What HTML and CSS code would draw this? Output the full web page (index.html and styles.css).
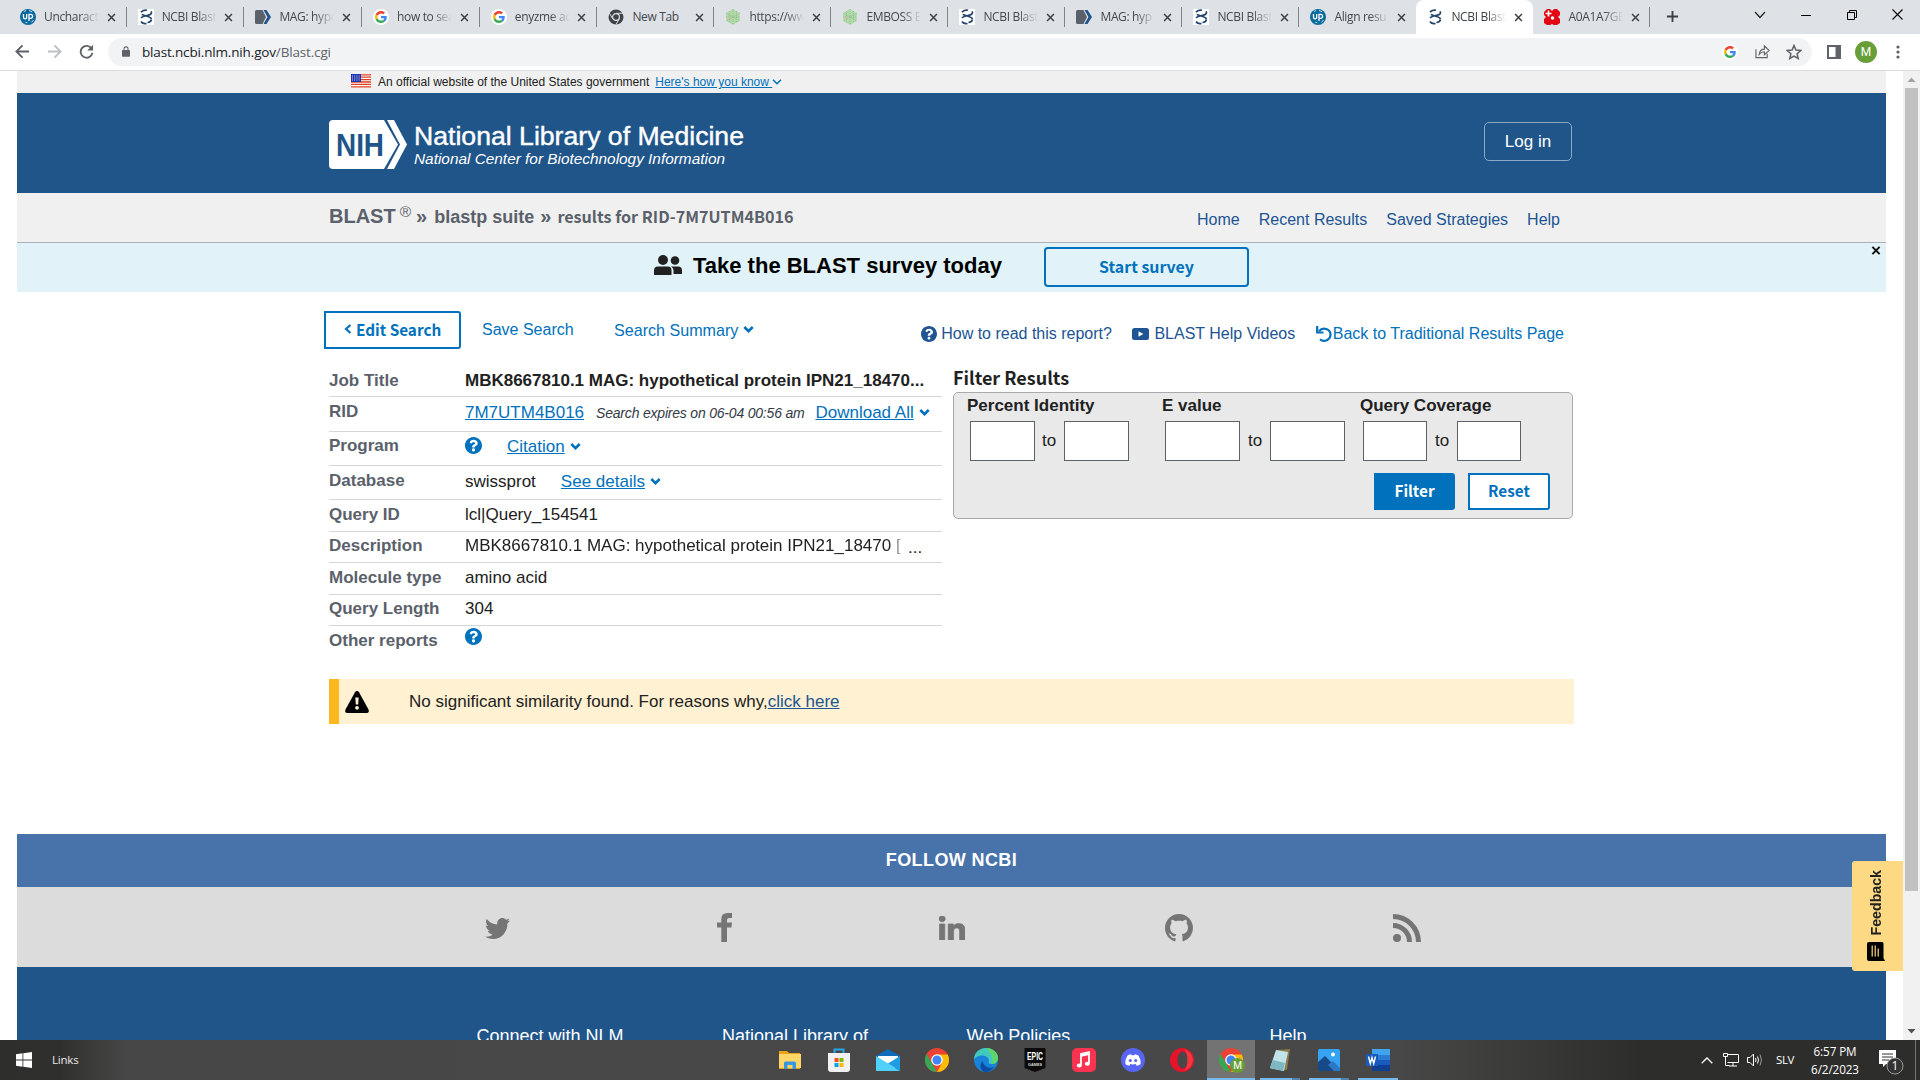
FILE: index.html
```
<!DOCTYPE html>
<html lang="en">
<head>
<meta charset="utf-8">
<title>NCBI Blast</title>
<link rel="stylesheet" href="styles.css">
</head>
<body>
<svg class="sprite" width="0" height="0">
  <symbol id="close" viewBox="0 0 10 10"><path d="M1.2 1.2l7.6 7.6M8.8 1.2L1.2 8.8" stroke="currentColor" stroke-width="1.7" fill="none"/></symbol>
  <symbol id="uniprot" viewBox="0 0 16 16"><circle cx="8" cy="8" r="8" fill="#0a6a9e"/><path d="M3.5 5v3.2q0 1.6 1.6 1.6t1.6-1.6V5M9 12V5.3h1.6a1.9 1.9 0 0 1 0 4H9" fill="none" stroke="#fff" stroke-width="1.3"/><path d="M4 2.5l2-.9M9 1.6l3 1M13.5 11l-2 2.4M7.3 13.8l-2-.6" stroke="#bfe0ef" stroke-width="1"/></symbol>
  <symbol id="dna" viewBox="0 0 16 16"><path d="M3 3.200C4.500 1 7 .8 9 1.300M13 2.300C14.500 5 12 6 9 6.500 6 7 4 7.500 3.200 9M3.800 5.300C6 7 12 7 13.500 10M13.500 10.500c-.5 2-2 2.800-4 3M3 12.500c1.200 2 3 2.500 5.500 2" fill="none" stroke="#24446b" stroke-width="1.700"/></symbol>
  <symbol id="ncbi" viewBox="0 0 16 16"><path d="M1.500 1h6L11 8l-3.500 7h-6Q0 15 0 13.500v-11Q0 1 1.500 1z" fill="#5b616b"/><path d="M8.500 1h3L16 8l-4.500 7h-3L12.500 8z" fill="#20558a"/></symbol>
  <symbol id="google" viewBox="0 0 48 48"><path fill="#EA4335" d="M24 9.500c3.540 0 6.710 1.220 9.210 3.600l6.850-6.850C35.900 2.380 30.470 0 24 0 14.620 0 6.510 5.380 2.560 13.220l7.980 6.190C12.430 13.720 17.740 9.500 24 9.500z"/><path fill="#4285F4" d="M46.980 24.550c0-1.570-.15-3.090-.38-4.550H24v9.020h12.940c-.58 2.960-2.260 5.480-4.780 7.180l7.730 6c4.510-4.180 7.090-10.360 7.090-17.650z"/><path fill="#FBBC05" d="M10.530 28.590c-.48-1.450-.76-2.990-.76-4.590s.27-3.140.76-4.590l-7.980-6.190C.92 16.460 0 20.120 0 24c0 3.880.92 7.540 2.560 10.780l7.970-6.190z"/><path fill="#34A853" d="M24 48c6.480 0 11.930-2.130 15.890-5.810l-7.730-6c-2.150 1.450-4.920 2.300-8.160 2.300-6.260 0-11.570-4.220-13.470-9.910l-7.980 6.190C6.510 42.620 14.620 48 24 48z"/></symbol>
  <symbol id="gchip" viewBox="0 0 16 16"><circle cx="8" cy="8" r="8" fill="#fff"/><use href="#google" x="2" y="2" width="12" height="12"/></symbol>
  <symbol id="chromegrey" viewBox="0 0 16 16"><circle cx="8" cy="8" r="7.500" fill="#3f4449"/><circle cx="8" cy="8" r="3.400" fill="#3f4449" stroke="#dee1e6" stroke-width="1.200"/><path d="M8 4.300h7M4.800 9.800L1.300 4.200M11.200 9.800L8 15.500" stroke="#dee1e6" stroke-width="1"/></symbol>
  <symbol id="embl" viewBox="0 0 16 16"><path d="M8 0l6.800 4v8L8 16l-6.800-4V4z" fill="#b2d8ac"/><path d="M8 0v16M1.200 4l13.600 8M14.800 4L1.200 12M1.200 8h13.600M4.500 2v12M11.500 2v12" stroke="#84c07c" stroke-width=".8" stroke-dasharray="1 1"/><circle cx="5" cy="9" r="1" fill="#f2aaa2"/></symbol>
  <symbol id="expasy" viewBox="0 0 16 16"><path d="M3 0h3l2 2 2-2h3l3 3v3l-2 2 2 2v4l-3 2h-3l-2-1-2 1H3l-3-2v-4l2-2-2-2V3z" fill="#e30613"/><path d="M4.500 1.500v6M1.500 4.500h6" stroke="#fff" stroke-width="1.700"/><circle cx="8.500" cy="9" r="1.800" fill="#fff"/></symbol>
  <symbol id="caret" viewBox="0 0 10 7"><path d="M.8 1L5 5.200 9.200 1" fill="none" stroke="currentColor" stroke-width="2.600"/></symbol>
  <symbol id="question" viewBox="8 8 496 496"><path fill="currentColor" d="M504 256c0 136.997-111.043 248-248 248S8 392.997 8 256C8 119.083 119.043 8 256 8s248 111.083 248 248zM262.655 90c-54.497 0-89.255 22.957-116.549 63.758-3.536 5.286-2.353 12.415 2.715 16.258l34.699 26.310c5.205 3.947 12.621 3.008 16.665-2.122 17.864-22.658 30.113-35.797 57.303-35.797 20.429 0 45.698 13.148 45.698 32.958 0 14.976-12.363 22.667-32.534 33.976C247.128 238.528 216 254.941 216 296v4c0 6.627 5.373 12 12 12h56c6.627 0 12-5.373 12-12v-1.333c0-28.462 83.186-29.647 83.186-106.667 0-58.002-60.165-102-116.531-102zM256 338c-25.365 0-46 20.635-46 46 0 25.364 20.635 46 46 46s46-20.636 46-46c0-25.365-20.635-46-46-46z"/></symbol>
  <symbol id="chrome" viewBox="0 0 24 24"><circle cx="12" cy="12" r="12" fill="#ea4335"/><path d="M1.600 6L6.800 15 12 24A12 12 0 0 1 1.600 6z" fill="#34a853"/><path d="M12 6.500h10.700A12 12 0 0 1 12 24l5-9z" fill="#fbbc05"/><circle cx="12" cy="12" r="5.800" fill="#fff"/><circle cx="12" cy="12" r="4.500" fill="#4285f4"/></symbol>
</svg>

<header class="tabstrip">
  <div class="tab wide"><svg class="fav"><use href="#uniprot"/></svg><span class="tab-title">Uncharact</span><svg class="x"><use href="#close"/></svg></div>
  <div class="tab wide"><svg class="fav white"><use href="#dna"/></svg><span class="tab-title">NCBI Blast</span><svg class="x"><use href="#close"/></svg></div>
  <div class="tab wide"><svg class="fav"><use href="#ncbi"/></svg><span class="tab-title">MAG: hypo</span><svg class="x"><use href="#close"/></svg></div>
  <div class="tab wide"><svg class="fav"><use href="#gchip"/></svg><span class="tab-title">how to sea</span><svg class="x"><use href="#close"/></svg></div>
  <div class="tab wide"><svg class="fav"><use href="#gchip"/></svg><span class="tab-title">enyzme ac</span><svg class="x"><use href="#close"/></svg></div>
  <div class="tab"><svg class="fav"><use href="#chromegrey"/></svg><span class="tab-title full">New Tab</span><svg class="x"><use href="#close"/></svg></div>
  <div class="tab"><svg class="fav"><use href="#embl"/></svg><span class="tab-title">https://ww</span><svg class="x"><use href="#close"/></svg></div>
  <div class="tab"><svg class="fav"><use href="#embl"/></svg><span class="tab-title">EMBOSS E</span><svg class="x"><use href="#close"/></svg></div>
  <div class="tab"><svg class="fav white"><use href="#dna"/></svg><span class="tab-title">NCBI Blast</span><svg class="x"><use href="#close"/></svg></div>
  <div class="tab"><svg class="fav"><use href="#ncbi"/></svg><span class="tab-title">MAG: hyp</span><svg class="x"><use href="#close"/></svg></div>
  <div class="tab"><svg class="fav white"><use href="#dna"/></svg><span class="tab-title">NCBI Blast</span><svg class="x"><use href="#close"/></svg></div>
  <div class="tab last"><svg class="fav"><use href="#uniprot"/></svg><span class="tab-title">Align resu</span><svg class="x"><use href="#close"/></svg></div>
  <div class="tab active"><svg class="fav"><use href="#dna"/></svg><span class="tab-title">NCBI Blast</span><svg class="x"><use href="#close"/></svg></div>
  <div class="tab"><svg class="fav"><use href="#expasy"/></svg><span class="tab-title">A0A1A7GE</span><svg class="x"><use href="#close"/></svg></div>
  <svg class="newtab" viewBox="0 0 14 14"><path d="M7 1v12M1 7h12" stroke="#3c4043" stroke-width="2"/></svg>
  <div class="wincontrols">
    <svg width="12" height="8" viewBox="0 0 12 8"><path d="M1 1l5 5.500L11 1" fill="none" stroke="#222" stroke-width="1.200"/></svg>
    <svg width="10" height="10" viewBox="0 0 10 10"><path d="M0 5.500h10" stroke="#000"/></svg>
    <svg width="10" height="10" viewBox="0 0 10 10"><path d="M.5 2.500h7v7h-7zM2.500 2.500v-2h7v7h-2" fill="none" stroke="#000"/></svg>
    <svg width="11" height="11" viewBox="0 0 11 11"><path d="M.5.5l10 10M10.500.5l-10 10" stroke="#000" stroke-width="1.100"/></svg>
  </div>
</header>

<div class="toolbar">
  <svg class="nav-back" viewBox="0 0 16 16"><path d="M15 8H2M8 1.500L1.500 8 8 14.500" fill="none" stroke="#5f6368" stroke-width="2"/></svg>
  <svg class="nav-fwd" viewBox="0 0 16 16"><path d="M1 8h13M8 1.500L14.500 8 8 14.500" fill="none" stroke="#bdc1c6" stroke-width="2"/></svg>
  <svg class="nav-reload" viewBox="0 0 16 16"><path d="M13.500 5A6.300 6.300 0 1 0 14.300 9.500" fill="none" stroke="#5f6368" stroke-width="2"/><path d="M15 .8V7H8.800z" fill="#5f6368"/></svg>
  <div class="omnibox">
    <svg class="lock" viewBox="0 0 10 13"><path d="M1 4.500h8q1 0 1 1V12q0 1-1 1H1q-1 0-1-1V5.500q0-1 1-1z" fill="#5f6368"/><path d="M2.500 5V3.200a2.500 2.500 0 0 1 5 0V5" fill="none" stroke="#5f6368" stroke-width="1.300"/></svg>
    <span class="url">blast.ncbi.nlm.nih.gov<span class="url-path">/Blast.cgi</span></span>
    <svg class="omni-g"><use href="#gchip"/></svg>
    <svg class="omni-share" viewBox="0 0 16 16"><path d="M1 5.500v9h12v-4M4.500 11c.5-4 2.500-5.500 5.500-5.500V2l5 5-5 4.500V8.300c-2.500 0-4 .7-5.500 2.700z" fill="none" stroke="#5f6368" stroke-width="1.200"/></svg>
    <svg class="omni-star" viewBox="0 0 16 16"><path d="M8 1.500l1.900 4.600 4.900.4-3.700 3.200 1.100 4.800L8 12l-4.200 2.500 1.100-4.800L1.200 6.500l4.900-.4z" fill="none" stroke="#5f6368" stroke-width="1.500"/></svg>
  </div>
  <svg class="side" viewBox="0 0 14 14"><path d="M1 1h12v12H1z" fill="none" stroke="#5f6368" stroke-width="2"/><path d="M8.500 1H13v12H8.500z" fill="#5f6368"/></svg>
  <span class="avatar">M</span>
  <svg class="dots" viewBox="0 0 4 14"><circle cx="2" cy="2" r="1.600" fill="#5f6368"/><circle cx="2" cy="7" r="1.600" fill="#5f6368"/><circle cx="2" cy="12" r="1.600" fill="#5f6368"/></svg>
</div>

<div class="viewport">
  <main class="page">
    <div class="gov">
      <svg class="flag" viewBox="0 0 20 14"><path fill="#fff" d="M0 0h20v14H0z"/><path d="M0 .8h20M0 3.200h20M0 5.600h20M0 8h20M0 10.400h20M0 12.800h20" stroke="#db3e1f" stroke-width="1.300"/><path fill="#1e33b1" d="M0 0h10v8H0z"/><path d="M1 2h8M1 4h8M1 6h8" stroke="#fff" stroke-width=".8" stroke-dasharray="1 1.200"/></svg>
      <span class="gov-text">An official website of the United States government</span>
      <a class="gov-link">Here's how you know&nbsp;</a><svg class="gov-caret" viewBox="0 0 10 6"><path d="M1 .7l4 4 4-4" fill="none" stroke="#0071bc" stroke-width="1.500"/></svg>
    </div>
    <div class="nlm">
      <svg class="logo" viewBox="0 0 420 50">
        <path d="M4 0h51l14 24.500L55 49H4q-4 0-4-4V4q0-4 4-4z" fill="#fff"/>
        <path d="M58 0h7l13 24.500L65 49h-7l13-24.500z" fill="#fff"/>
        <text x="7" y="35.500" class="logo-nih" textLength="48" lengthAdjust="spacingAndGlyphs">NIH</text>
        <text x="85" y="24.500" class="logo-nlm" textLength="330" lengthAdjust="spacingAndGlyphs">National Library of Medicine</text>
        <text x="85" y="44" class="logo-ncbi" textLength="311" lengthAdjust="spacingAndGlyphs">National Center for Biotechnology Information</text>
      </svg>
      <a class="login">Log in</a>
    </div>
    <div class="crumbs">
      <div class="trail"><span class="blast">BLAST</span><span class="reg">®</span><span class="sep">»</span><span class="suite">blastp suite</span><span class="sep second">»</span><span class="rid-title">results for RID-7M7UTM4B016</span></div>
      <nav class="links"><a>Home</a><a>Recent Results</a><a>Saved Strategies</a><a>Help</a></nav>
    </div>
    <div class="survey">
      <svg class="people" viewBox="0 0 28 20"><circle cx="9" cy="5" r="5" fill="#212121"/><circle cx="21" cy="5.500" r="4.300" fill="#212121"/><path d="M4 11.500h10q3.500 0 3.500 4V20H0v-4.500q0-4 4-4zM17 11.500h7q4 0 4 4V19h-8.500v-3.500q0-2.500-2.500-4z" fill="#212121"/></svg>
      <span class="survey-text">Take the BLAST survey today</span>
      <a class="survey-btn">Start survey</a>
      <svg class="survey-x" viewBox="0 0 10 10"><path d="M1 1l8 8M9 1L1 9" stroke="#111" stroke-width="2.200"/></svg>
    </div>

    <section class="content">
      <div class="actions">
        <a class="edit"><svg viewBox="0 0 8 10"><path d="M6.500 1L2 5l4.500 4" fill="none" stroke="currentColor" stroke-width="2.200"/></svg>Edit Search</a>
        <a class="save">Save Search</a>
        <a class="summary">Search Summary<svg class="caret"><use href="#caret"/></svg></a>
        <div class="help">
          <a class="dark"><svg class="q16"><use href="#question"/></svg>How to read this report?</a>
          <a class="dark video"><svg class="tube" viewBox="0 0 17 12"><rect width="17" height="12" rx="2.500" fill="#205493"/><path d="M6.500 3.200v5.600L11.300 6z" fill="#fff"/></svg>BLAST Help Videos</a>
          <a class="back"><svg class="undo" viewBox="0 0 16 16"><path d="M3 5.200C7 .5 14.500 3 14.500 8.500 14.500 14 8 16.500 4 13.300" fill="none" stroke="#0071bc" stroke-width="2.200"/><path d="M1.200 0v6.500h6.300" fill="none" stroke="#0071bc" stroke-width="2.200"/></svg>Back to Traditional Results Page</a>
        </div>
      </div>

      <div class="columns">
        <dl class="info">
          <div class="row r1"><dt>Job Title</dt><dd><b>MBK8667810.1 MAG: hypothetical protein IPN21_18470...</b></dd></div>
          <div class="row r2"><dt>RID</dt><dd><a>7M7UTM4B016</a><i>Search expires on 06-04 00:56 am</i><a>Download All</a><svg class="caret"><use href="#caret"/></svg></dd></div>
          <div class="row r3"><dt>Program</dt><dd><svg class="q17"><use href="#question"/></svg><a class="cite">Citation</a><svg class="caret"><use href="#caret"/></svg></dd></div>
          <div class="row r4"><dt>Database</dt><dd>swissprot<a class="see">See details</a><svg class="caret"><use href="#caret"/></svg></dd></div>
          <div class="row r5"><dt>Query ID</dt><dd>lcl|Query_154541</dd></div>
          <div class="row r6"><dt>Description</dt><dd><span class="clip">MBK8667810.1 MAG: hypothetical protein IPN21_18470 [</span><span class="more">...</span></dd></div>
          <div class="row r7"><dt>Molecule type</dt><dd>amino acid</dd></div>
          <div class="row r8"><dt>Query Length</dt><dd>304</dd></div>
          <div class="row r9"><dt>Other reports</dt><dd><svg class="q17"><use href="#question"/></svg></dd></div>
        </dl>
        <div class="filter">
          <h2>Filter Results</h2>
          <form class="panel">
            <div class="fields">
              <fieldset class="pi"><legend>Percent Identity</legend><div><input><span>to</span><input></div></fieldset>
              <fieldset class="ev"><legend>E value</legend><div><input><span>to</span><input></div></fieldset>
              <fieldset class="qc"><legend>Query Coverage</legend><div><input><span>to</span><input></div></fieldset>
            </div>
            <div class="buttons"><a class="primary">Filter</a><a class="outline">Reset</a></div>
          </form>
        </div>
      </div>

      <div class="alert">
        <svg viewBox="0 0 24 22"><path d="M12 0q1.200 0 2 1.300l9.500 17.200q1 3.500-1.500 3.500H2Q-.5 22 .5 18.500L10 1.300Q10.800 0 12 0z"/><path d="M10.300 6.500h3.400l-.5 7h-2.400z" fill="#fff1d2"/><circle cx="12" cy="16.800" r="1.900" fill="#fff1d2"/></svg>
        <span>No significant similarity found. For reasons why,<a>click here</a></span>
      </div>
    </section>

    <footer>
      <div class="follow">FOLLOW NCBI</div>
      <div class="social">
        <svg class="bird" width="25" height="21" viewBox="0 48 512 416" preserveAspectRatio="none"><path d="M459.370 151.716c.325 4.548.325 9.097.325 13.645 0 138.720-105.583 298.558-298.558 298.558-59.452 0-114.680-17.219-161.137-47.106 8.447.974 16.568 1.299 25.340 1.299 49.055 0 94.213-16.568 130.274-44.832-46.132-.975-84.792-31.188-98.112-72.772 6.498.974 12.995 1.624 19.818 1.624 9.421 0 18.843-1.300 27.614-3.573-48.081-9.747-84.143-51.980-84.143-102.985v-1.299c13.969 7.797 30.214 12.670 47.431 13.319-28.264-18.843-46.781-51.005-46.781-87.391 0-19.492 5.197-37.360 14.294-52.954 51.655 63.675 129.300 105.258 216.365 109.807-1.624-7.797-2.599-15.918-2.599-24.040 0-57.828 46.782-104.934 104.934-104.934 30.213 0 57.502 12.670 76.670 33.137 23.715-4.548 46.456-13.320 66.599-25.340-7.798 24.366-24.366 44.833-46.132 57.827 21.117-2.273 41.584-8.122 60.426-16.243-14.292 20.791-32.161 39.308-52.628 54.253z"/></svg>
        <svg width="15" height="29" viewBox="0 0 15 29"><path d="M4.300 29V14.500H0V9.500h4.300V6Q4.300 0 10.500 0H15v5h-2.800Q10 5 10 7v2.500h5l-.6 5H10V29z"/></svg>
        <svg width="26" height="24" viewBox="0 0 448 448" preserveAspectRatio="none"><path d="M100.280 448H7.400V148.900h92.880zM53.790 108.100C24.090 108.100 0 83.500 0 53.800a53.790 53.790 0 0 1 107.580 0c0 29.700-24.100 54.300-53.790 54.300zM447.900 448h-92.680V302.400c0-34.700-.7-79.200-48.290-79.200-48.290 0-55.690 37.700-55.690 76.700V448h-92.780V148.900h89.080v40.800h1.300c12.400-23.500 42.690-48.300 87.880-48.300 94 0 111.280 61.900 111.280 142.300V448z" stroke="#757575" stroke-width="12"/></svg>
        <svg width="28" height="28" viewBox="0 0 16 16"><path d="M8 0C3.580 0 0 3.580 0 8c0 3.540 2.290 6.530 5.470 7.590.4.070.55-.17.55-.38 0-.19-.01-.82-.01-1.490-2.010.37-2.530-.49-2.690-.94-.09-.23-.48-.94-.82-1.130-.28-.15-.68-.52-.01-.53.63-.01 1.080.58 1.230.82.72 1.210 1.870.87 2.330.66.07-.52.28-.87.51-1.070-1.780-.2-3.640-.89-3.640-3.950 0-.87.31-1.590.82-2.150-.08-.2-.36-1.020.08-2.120 0 0 .67-.21 2.200.82.64-.18 1.320-.27 2-.27s1.360.09 2 .27c1.530-1.040 2.200-.82 2.200-.82.44 1.100.16 1.920.08 2.120.51.56.82 1.270.82 2.150 0 3.070-1.870 3.750-3.650 3.950.29.25.54.73.54 1.480 0 1.070-.01 1.930-.01 2.200 0 .21.15.46.55.38A8.010 8.010 0 0 0 16 8c0-4.420-3.580-8-8-8z"/></svg>
        <svg width="28" height="28" viewBox="0 0 28 28"><circle cx="4" cy="24" r="4"/><path d="M0 11.500A16.500 16.500 0 0 1 16.500 28M0 2.500A25.500 25.500 0 0 1 25.500 28" fill="none" stroke="#757575" stroke-width="5"/></svg>
      </div>
      <div class="foot">
        <span>Connect with NLM</span><span>National Library of</span><span>Web Policies</span><span>Help</span>
      </div>
    </footer>
  </main>
  <div class="feedback"><svg viewBox="0 0 18 19"><path d="M2 0h13q1.500 0 1.500 1.500V16l1.500 3H2q-2 0-2-2V2q0-2 2-2z"/><path d="M5.200 3.500v11M8.200 3.500v11M11.200 6.500v8" stroke="#fcd982" stroke-width="1.200"/></svg><span>Feedback</span></div>
  <div class="scrollbar"><svg width="17" height="17" viewBox="0 0 17 17"><path d="M4.500 11h8l-4-4.500z" fill="#a3a3a3"/></svg><i></i><svg width="17" height="17" viewBox="0 0 17 17"><path d="M4.500 6h8l-4 4.500z" fill="#505050"/></svg></div>
</div>

<div class="taskbar">
  <svg class="win" viewBox="0 0 16 16"><path d="M0 2.200l6.500-.9v6.300H0zM7.300 1.200L16 0v7.600H7.300zM0 8.400h6.500v6.300L0 13.800zM7.300 8.400H16V16l-8.700-1.200z" fill="#fff"/></svg>
  <span class="links-label">Links</span>
  <div class="apps">
    <span><svg viewBox="0 0 24 24"><path d="M1 3h8l2 2h11v16H1z" fill="#e8a317"/><path d="M1 6h22v14H1z" fill="#ffd667"/><path d="M6 21v-6q0-1.500 1.500-1.500h9q1.500 0 1.500 1.500v6h-3.500v-4h-5v4z" fill="#3a96dd"/></svg></span>
    <span><svg viewBox="0 0 24 24"><path d="M7.500 6V1.500h9V6" fill="none" stroke="#28a8ea" stroke-width="2"/><path d="M1 5h22v16q0 3-3 3H4q-3 0-3-3z" fill="#f1f1f1"/><path d="M7.500 10H11.500v4h-4z" fill="#f25022"/><path d="M12.500 10h4v4h-4z" fill="#7fba00"/><path d="M7.500 15h4v4h-4z" fill="#00a4ef"/><path d="M12.500 15h4v4h-4z" fill="#ffb900"/></svg></span>
    <span><svg viewBox="0 0 24 24"><path d="M0 8l12-7 12 7v15H0z" fill="#0f6cbd"/><path d="M2 8h20v12H2z" fill="#fff"/><path d="M0 8l24 15H0z" fill="#50d0fa"/><path d="M24 8v15L12 15.500z" fill="#1f9de3"/></svg></span>
    <span><svg><use href="#chrome"/></svg></span>
    <span><svg viewBox="0 0 24 24"><circle cx="12" cy="12" r="12" fill="#1683d8"/><path d="M0 12C0 4 6 0 12 0s12 4.500 12 10c0 4-3 6-6 6s-4-1-3-3c0-4-4-5.500-7-5.500S1 9 0 12z" fill="#43c8c0"/><path d="M12 0c7 0 12 4.500 12 10 0 4-3 6-6 6 2-7-2-12-6-16z" fill="#5ed66b"/><path d="M9 13c0 5 5 8 11 6-2 3-5 5-9 5-5-1-6-8-2-11z" fill="#0c4ca4"/></svg></span>
    <span><svg viewBox="0 0 24 24"><path d="M1.500 0h21v20L12 24 1.500 20z" fill="#0b0b0b"/><text x="12" y="12" class="epic" textLength="16" lengthAdjust="spacingAndGlyphs">EPIC</text><text x="12" y="18" class="games" textLength="14" lengthAdjust="spacingAndGlyphs">GAMES</text></svg></span>
    <span><svg viewBox="0 0 24 24"><rect width="24" height="24" rx="5" fill="#fa3350"/><path d="M9 17V6l8-1.800V15" fill="none" stroke="#fff" stroke-width="1.800"/><path d="M9 7.500l8-1.800" stroke="#fff" stroke-width="2.500"/><ellipse cx="7.300" cy="17.500" rx="2.500" ry="2" fill="#fff"/><ellipse cx="15.300" cy="15.700" rx="2.500" ry="2" fill="#fff"/></svg></span>
    <span><svg viewBox="0 0 24 24"><circle cx="12" cy="12" r="12" fill="#5865f2"/><path d="M6.500 7.500Q9 6.300 10 6.200l.6 1h2.800l.6-1q1.500.2 3.500 1.300 2.500 4 2.200 8.500-2 1.500-4 1.800l-1-1.700q-2.700.7-5.400 0l-1 1.700q-2-.3-4-1.800-.3-4.500 2.200-8.500z" fill="#fff"/><circle cx="9.300" cy="12.500" r="1.600" fill="#5865f2"/><circle cx="14.700" cy="12.500" r="1.600" fill="#5865f2"/></svg></span>
    <span><svg viewBox="0 0 24 24"><path fill-rule="evenodd" d="M12 0a12 12 0 1 0 0 24 12 12 0 0 0 0-24zM12.500 3.500c3 0 5 4 5 8.500s-2 8.500-5 8.500-5-4-5-8.500 2-8.500 5-8.500z" fill="#e8132b"/><path d="M14 1q8 2.500 9 11-1 8-9 11 3.500-4 3.500-11T14 1z" fill="#ff5a5a" opacity=".5"/></svg></span>
    <span class="on run"><svg><use href="#chrome"/></svg><b>M</b></span>
    <span class="run multi"><svg viewBox="0 0 24 24"><path d="M9 2l13-1-3 21-16-1z" fill="#8d7a48"/><path d="M8 2l12 2-4 19L2 20z" fill="#bfe3e8"/><path d="M5 12l12 3-2 8L2 20z" fill="#7fb6c4"/></svg></span>
    <span class="run multi"><svg viewBox="0 0 24 24"><rect x="1" y="1" width="22" height="22" rx="1.500" fill="#35a3f1"/><path d="M1 14l7-6 15 15H1z" fill="#174a86"/><path d="M11 17l5-4 7 7v3h-6z" fill="#2d78c6"/><circle cx="16" cy="6.500" r="2" fill="#fff"/></svg></span>
    <span class="run"><svg viewBox="0 0 24 24"><path d="M6 1h18v6H6z" fill="#41a5ee"/><path d="M6 7h18v5H6z" fill="#2b7cd3"/><path d="M6 12h18v5H6z" fill="#185abd"/><path d="M6 17h18v6H6z" fill="#103f91"/><path d="M0 6h12v12H0z" fill="#185abd"/><path d="M2.500 8.500L4.300 15.500 6 9.500 7.700 15.500 9.500 8.500" fill="none" stroke="#fff" stroke-width="1.400"/></svg></span>
  </div>
  <div class="tray">
    <svg class="up" viewBox="0 0 12 7"><path d="M.7 6.300L6 1l5.300 5.300" fill="none" stroke="#fff" stroke-width="1.300"/></svg>
    <svg class="net" viewBox="0 0 16 14"><path d="M4.500 1.500h11v8H4.500M6 13h8M10 10v3M.5.5h4v3h-4zM2.500 4v8.500h4" fill="none" stroke="#fff"/></svg>
    <svg class="vol" viewBox="0 0 16 14"><path d="M.5 4.500h2.500L6.500 1v12L3 9.500H.5z" fill="none" stroke="#fff"/><path d="M8.500 5q1 2 0 4M10.500 3.500q2 3.500 0 7" fill="none" stroke="#fff"/><path d="M13 1.500q3 5.500 0 11" fill="none" stroke="#999"/></svg>
    <span class="lang">SLV</span>
    <span class="clock">6:57 PM<br>6/2/2023</span>
    <svg class="notif" viewBox="0 0 25 26"><path d="M0 1h17v14H7l-3 3v-3H0z" fill="#fff"/><path d="M3 5h11M3 8h11M3 11h7" stroke="#333"/><circle cx="16" cy="17" r="8" fill="#333" stroke="#999"/><text x="16" y="21" class="badge">1</text></svg>
  </div>
</div>
</body>
</html>
```
FILE: styles.css
```
* { box-sizing: border-box; }
body {
  margin: 0;
  width: 1920px;
  height: 1080px;
  overflow: hidden;
  background: #fff;
  color: #212121;
  font: 17px/20px "Liberation Sans", Arial, sans-serif;
}
svg { display: block; flex: none; }
a { color: #0071bc; white-space: nowrap; }
.sprite { position: absolute; }

/* browser tabs */
.tabstrip {
  display: flex;
  height: 34px;
  background: #dee1e6;
  padding-left: 9px;
  font: 12px/34px "Open Sans", "Noto Sans", sans-serif;
  color: #45494d;
}
.tab {
  position: relative;
  display: flex;
  align-items: center;
  width: 117px;
  padding-left: 11px;
  flex: none;
}
.tab.wide { width: 117.700px; }
.tab:not(.active):not(.last)::after {
  content: "";
  position: absolute;
  right: 0;
  top: 7px;
  width: 1px;
  height: 20px;
  background: #808388;
}
.tab.active {
  width: 117px;
  background: #fff;
  border-radius: 8px 8px 0 0;
  color: #3c4043;
}
.fav { width: 16px; height: 16px; }
.fav.white { background: #fff; }
.tab-title {
  width: 55px;
  margin-left: 8px;
  overflow: hidden;
  white-space: nowrap;
  letter-spacing: -.35px;
  -webkit-mask-image: linear-gradient(90deg, #000 65%, transparent);
  mask-image: linear-gradient(90deg, #000 65%, transparent);
}
.tab-title.full { -webkit-mask-image: none; mask-image: none; }
.x { width: 9px; height: 9px; margin-left: 7.500px; color: #3c4043; }
.newtab { width: 13px; height: 13px; margin: 10px 0 0 16px; }
.wincontrols {
  display: flex;
  align-items: center;
  gap: 35.500px;
  height: 29px;
  margin-left: auto;
  padding-right: 17px;
}

/* address row */
.toolbar {
  display: flex;
  align-items: center;
  height: 37px;
  padding: 0 16px 1px 15px;
  border-bottom: 1px solid #dadce0;
}
.nav-back, .nav-fwd, .nav-reload { width: 15px; height: 15px; }
.nav-fwd { margin-left: 17px; }
.nav-reload { margin-left: 17px; }
.omnibox {
  display: flex;
  align-items: center;
  width: 1704px;
  height: 28px;
  margin-left: 14px;
  padding: 0 10px 0 14px;
  border-radius: 14px;
  background: #f1f3f4;
}
.lock { width: 8px; height: 11px; }
.url {
  margin-left: 12px;
  font: 13.500px/28px "Open Sans", "Noto Sans", sans-serif;
  letter-spacing: -.16px;
  color: #202124;
}
.url-path { color: #5f6368; }
.omni-g { width: 16px; height: 16px; margin-left: auto; }
.omni-share { width: 15px; height: 15px; margin-left: 17px; }
.omni-star { width: 16px; height: 16px; margin-left: 16px; }
.side { width: 14px; height: 14px; margin-left: 15px; }
.avatar {
  width: 22px;
  height: 22px;
  margin-left: 14px;
  border-radius: 50%;
  background: #689f38;
  color: #fff;
  font: 12px/22px Roboto, sans-serif;
  text-align: center;
}
.dots { width: 4px; height: 14px; margin-left: auto; margin-right: 4px; }

.viewport { position: relative; display: flex; height: 969px; overflow: hidden; }
.page { width: 1869px; margin: 0 17px; flex: none; }

.gov {
  display: flex;
  align-items: center;
  height: 22px;
  padding-left: 334px;
  background: #f0f0f0;
  font-size: 12px;
  line-height: 22px;
}
.flag { width: 20px; height: 14px; margin-bottom: 2px; }
.gov-text { margin-left: 7px; white-space: nowrap; }
.gov-link { margin-left: 6px; text-decoration: underline; }
.gov-caret { width: 10px; height: 6px; }

.nlm {
  display: flex;
  height: 100px;
  padding: 27px 314px 0 312px;
  justify-content: space-between;
  background: #20558a;
}
.logo { width: 420px; height: 50px; }
.logo-nih { font: bold 31px "Liberation Sans", sans-serif; fill: #20558a; }
.logo-nlm { font: 25px "Liberation Sans", sans-serif; fill: #fff; stroke: #fff; stroke-width: .4px; }
.logo-ncbi { font: italic 15.500px "Liberation Sans", sans-serif; fill: #fff; }
.login {
  width: 88px;
  height: 39px;
  margin-top: 2px;
  border: 1px solid #8ba8c4;
  border-radius: 5px;
  color: #fff;
  line-height: 38px;
  text-align: center;
}

.crumbs {
  display: flex;
  justify-content: space-between;
  height: 50px;
  padding: 0 326px 0 312px;
  border-bottom: 1px solid #aeb0b5;
  background: #f0f0f0;
}
.trail {
  display: flex;
  align-items: baseline;
  height: 30px;
  padding-top: 11px;
  color: #5b616b;
  font-weight: bold;
  white-space: nowrap;
}
.blast { font-size: 20px; line-height: 24px; }
.reg { position: relative; top: -6px; margin-left: 4px; font-size: 15.500px; font-weight: normal; line-height: 16px; }
.sep { margin-left: 5px; font: bold 20px/20px "Liberation Sans", sans-serif; }
.sep.second { margin-left: 6px; }
.suite { margin-left: 7px; font-size: 18px; }
.rid-title { margin-left: 6px; font: bold 16.150px/20px "Noto Sans CJK SC", sans-serif; }
.links { display: flex; gap: 19px; padding-top: 17px; font-size: 16px; }
.links a { color: #205493; }

.survey {
  display: flex;
  height: 49px;
  padding-left: 637px;
  background: #e1f3f8;
}
.people { width: 28px; height: 20px; margin-top: 12px; }
.survey-text { margin: 12px 0 0 11px; width: 351px; font: bold 22px/22px "Liberation Sans", sans-serif; color: #000; white-space: nowrap; }
.survey-btn {
  width: 205px;
  height: 40px;
  margin-top: 4px;
  border: 2px solid #0071bc;
  border-radius: 4px;
  font: bold 15.900px/35px "Noto Sans CJK SC", sans-serif;
  text-align: center;
}
.survey-x { width: 10px; height: 9px; margin: 3px 5px 0 auto; }

.content { width: 1249px; margin-left: 307px; padding-top: 19px; }
.actions { display: flex; height: 38px; line-height: 36px; }
.actions > a { display: flex; align-items: center; }
.edit {
  width: 137px;
  height: 38px;
  border: 2px solid #0071bc;
  border-radius: 0 3px 3px 0;
  font: bold 15.300px/32px "Noto Sans CJK SC", sans-serif;
  padding: 0 0 2px 18px;
}
.edit svg { width: 8px; height: 10px; margin-right: 4px; }
.save { margin-left: 21px; width: 132px; font-size: 16px; }
.summary { font-size: 16.100px; }
.caret { width: 11px; height: 7px; margin: 0 0 2px 5px; }
.help { display: flex; margin-left: auto; padding: 4px 9px 0 0; font-size: 16px; line-height: 38px; gap: 20.500px; }
.help a { display: flex; align-items: center; height: 38px; }
.help .dark { color: #205493; }
.q16 { width: 16px; height: 16px; margin-right: 4px; }
.tube { width: 17px; height: 12px; margin-right: 5px; }
.undo { width: 16px; height: 16px; margin-right: 1px; }

.columns { display: flex; margin-left: 5px; height: 330px; }
.info { width: 613px; margin: 21px 0 0; }
.row { display: flex; border-bottom: 1px solid #d6d7d9; padding-top: 5px; }
dt { width: 136px; flex: none; font-weight: bold; color: #5b616b; white-space: nowrap; }
dd { display: flex; align-items: center; height: 20px; margin: 0; white-space: nowrap; }
.r2 dd, .r3 dd, .r4 dd { margin-top: 1px; }
dd a { text-decoration: underline; }
dd i { margin: 0 11px 0 12px; font-size: 14px; letter-spacing: -.2px; color: #323a45; }
.r1 { height: 27px; padding-top: 1px; }
.r2 { height: 35px; }
.r3 { height: 34px; padding-top: 4px; }
.r4 { height: 34px; }
.r5 { height: 32px; }
.r6 { height: 31px; padding-top: 4px; }
.r7 { height: 32px; }
.r8 { height: 31px; padding-top: 4px; }
.r9 { border: 0; }
.r9 dd { margin-top: -5px; }
.q17 { width: 17px; height: 17px; color: #0071bc; }
.r3 .q17 { margin-bottom: 3px; }
dd .caret { color: #0071bc; }
.cite { margin-left: 25px; }
.see { margin-left: 25px; }
.clip {
  width: 438px;
  overflow: hidden;
  -webkit-mask-image: linear-gradient(90deg, #000 424px, transparent 442px);
  mask-image: linear-gradient(90deg, #000 424px, transparent 442px);
}
.more { margin-left: 5px; padding-top: 4px; }

.filter { width: 620px; margin: 18px 0 0 11px; }
.filter h2 { margin: 0; font: bold 18px/21px "Noto Sans CJK SC", sans-serif; height: 25px; white-space: nowrap; }
.panel {
  height: 127px;
  padding: 3px 22px 0 13px;
  border: 1px solid #aaa;
  border-radius: 5px;
  background: #e9e9e9;
}
.fields { display: flex; }
fieldset { margin: 0; padding: 0; border: 0; min-width: 0; }
legend { padding: 0; height: 25px; font-weight: bold; white-space: nowrap; }
fieldset div { display: flex; align-items: center; padding-left: 3px; }
fieldset span { margin: 0 8px 0 7px; line-height: 36px; width: 14px; }
.pi { width: 195px; }
.ev { width: 198px; }
input { width: 65px; height: 40px; padding: 0; border: 1px solid #5b616b; background: #fff; }
.ev input { width: 75px; }
.qc input { width: 64px; }
.ev span, .qc span { margin-left: 8px; }
.buttons { display: flex; justify-content: flex-end; gap: 13px; margin-top: 12px; }
.buttons a {
  width: 82px;
  height: 37px;
  border: 2px solid #0071bc;
  border-radius: 0 3px 3px 0;
  background: #fff;
  font: bold 15.300px/31px "Noto Sans CJK SC", sans-serif;
  text-align: center;
}
.buttons .primary { width: 81px; background: #0071bc; color: #fff; }

.alert {
  display: flex;
  align-items: center;
  width: 1245px;
  height: 45px;
  margin-left: 5px;
  padding-left: 6px;
  border-left: 10px solid #fdb81e;
  background: #fff1d2;
}
.alert svg { width: 24px; height: 22px; }
.alert span { margin: 1px 0 0 40px; font-size: 17px; }
.alert a { color: #205493; text-decoration: underline; }

footer { margin-top: 110px; }
.follow {
  height: 53px;
  background: #4773aa;
  color: #fff;
  font-weight: bold;
  font-size: 18px;
  letter-spacing: .4px;
  line-height: 52px;
  text-align: center;
}
.social {
  display: grid;
  grid-template-columns: repeat(5, 227.500px);
  justify-items: center;
  align-items: center;
  height: 80px;
  padding: 1px 0 0 366px;
  background: #dcdcdc;
  fill: #757575;
}
.bird { margin: 1px 0 0 1px; }
.foot {
  display: grid;
  grid-template-columns: 245.500px 244.500px 303px 200px;
  height: 113px;
  padding: 59px 0 0 459.500px;
  background: #20558a;
  color: #fff;
  font-size: 18px;
  line-height: 20px;
}

.feedback {
  position: absolute;
  right: 17px;
  top: 790px;
  display: flex;
  flex-direction: column-reverse;
  align-items: center;
  justify-content: space-between;
  width: 51px;
  height: 110px;
  padding: 9px 3px 10px 0;
  border-radius: 3px 0 0 3px;
  background: #fcd982;
}
.feedback svg { width: 18px; height: 19px; }
.feedback span {
  writing-mode: vertical-rl;
  transform: rotate(180deg);
  font: bold 14.200px/16px "Liberation Sans", sans-serif;
}
.scrollbar { width: 17px; background: #f1f1f1; }
.scrollbar i { display: block; width: 13px; height: 803px; margin: 0 2px 132px; background: #c1c1c1; }

/* taskbar */
.taskbar {
  position: relative;
  display: flex;
  align-items: center;
  height: 40px;
  background: linear-gradient(90deg, #2e2e2c 0, #2f2f2d 60px, #474747 125px, #484848 1400px, #2d2d2b 1640px);
  color: #fff;
  font: 12px/18px "Open Sans", "Noto Sans", sans-serif;
}
.taskbar::after { content: ""; position: absolute; right: 4px; top: 0; width: 1px; height: 40px; background: #777; }
.win { width: 16px; height: 16px; margin-left: 16px; }
.links-label { margin-left: 20px; width: 60px; font-size: 11.500px; letter-spacing: -.2px; color: #e8e8e8; }
.apps { display: flex; margin-left: 654px; gap: 1px; }
.apps span { position: relative; display: flex; align-items: center; justify-content: center; width: 48px; height: 40px; }
.apps svg { width: 24px; height: 24px; }
.apps .on { background: #737373; }
.run::after { content: ""; position: absolute; left: 4px; right: 4px; bottom: 0; height: 2px; background: #76b9ed; }
.on.run::after { left: 0; right: 0; }
.multi::after { background: linear-gradient(90deg, #76b9ed 32px, #5483a8 32px); }
.apps b {
  position: absolute;
  left: 23px;
  top: 18px;
  width: 15px;
  height: 15px;
  border-radius: 50%;
  background: #689f38;
  font: 10px/15px Roboto, sans-serif;
  text-align: center;
}
.epic { font: bold 10px "Liberation Sans", sans-serif; fill: #fff; text-anchor: middle; }
.games { font: bold 4px "Liberation Sans", sans-serif; fill: #ddd; text-anchor: middle; }
.tray { display: flex; align-items: center; margin-left: auto; padding-right: 16px; white-space: nowrap; }
.up { width: 12px; height: 7px; }
.net { width: 16px; height: 14px; margin-left: 10px; }
.vol { width: 16px; height: 14px; margin-left: 8px; }
.lang { margin-left: 13px; width: 33px; font-size: 11.500px; letter-spacing: -.4px; }
.clock { width: 52px; font-size: 11.700px; letter-spacing: -.1px; text-align: center; }
.notif { width: 25px; height: 26px; margin: 4px 0 0 18px; }
.badge { font: 12px "Open Sans", sans-serif; fill: #fff; text-anchor: middle; }
```
